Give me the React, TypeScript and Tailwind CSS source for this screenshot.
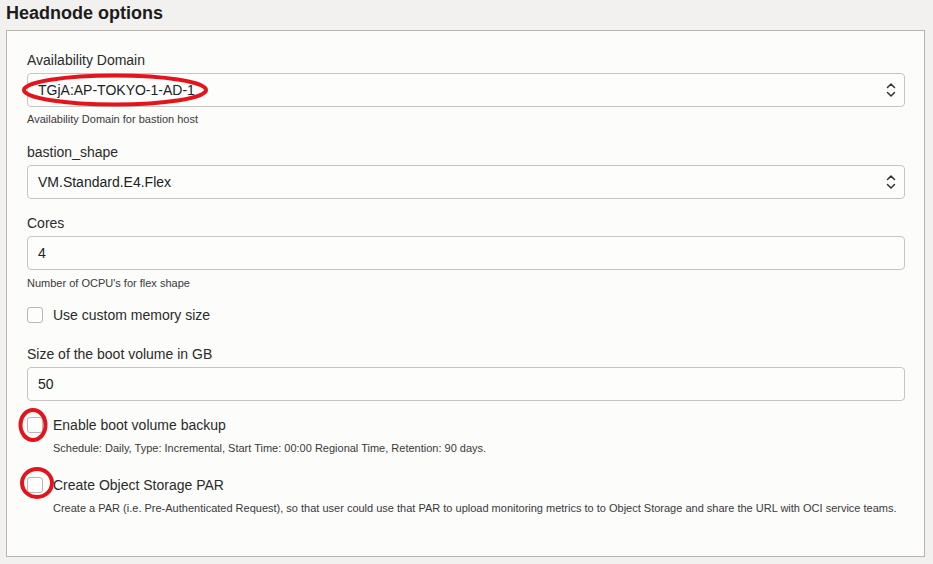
import * as React from "react"

function Chevrons() {
  return (
    <svg width="10" height="16" viewBox="0 0 10 16" fill="none" stroke="#333" strokeWidth="1.5" strokeLinecap="round" strokeLinejoin="round">
      <path d="M1.5 5.5 L5 2 L8.5 5.5" />
      <path d="M1.5 10.5 L5 14 L8.5 10.5" />
    </svg>
  )
}

function Label({ children, className = "" }: { children: React.ReactNode; className?: string }) {
  return <div className={`text-[14px] leading-[17px] text-[#2b2b2b] ${className}`}>{children}</div>
}

function Helper({ children, className = "" }: { children: React.ReactNode; className?: string }) {
  return <div className={`text-[11px] leading-[13px] text-[#3a3a3a] ${className}`}>{children}</div>
}

function Field({ value, select }: { value: string; select?: boolean }) {
  return (
    <div className="mt-[4px] h-[34px] flex items-center justify-between rounded-[4px] border border-[#c6c5c3] bg-[#fdfdfc] pl-[10px] pr-[8px] text-[14px] text-[#222]">
      <span>{value}</span>
      {select && <Chevrons />}
    </div>
  )
}

function Check({ label, className = "" }: { label: string; className?: string }) {
  return (
    <div className={`flex items-center h-[16px] ${className}`}>
      <div className="w-[16px] h-[16px] rounded-[3px] border border-[#b9b8b6] bg-[#fdfdfc]" />
      <span className="ml-[10px] text-[14px] leading-[17px] text-[#2b2b2b]">{label}</span>
    </div>
  )
}

export default function App() {
  return (
    <div className="relative w-[933px] h-[564px] bg-[#f2f1f0] overflow-hidden" style={{ fontFamily: '"Liberation Sans", Arial, sans-serif' }}>
      <div className="pl-[6px] pt-[1px] h-[30px] text-[18px] leading-[24px] font-bold text-[#1c1c1c]">Headnode options</div>

      <div className="ml-[6px] w-[919px] h-[527px] border border-[#b8b5b1] bg-[#fcfcfa] pl-[20px] pr-[19px] pt-[21px]">
        <Label>Availability Domain</Label>
        <Field value="TGjA:AP-TOKYO-1-AD-1" select />
        <Helper className="mt-[6px]">Availability Domain for bastion host</Helper>

        <Label className="mt-[18px]">bastion_shape</Label>
        <Field value="VM.Standard.E4.Flex" select />

        <Label className="mt-[16px]">Cores</Label>
        <Field value="4" />
        <Helper className="mt-[7px]">Number of OCPU's for flex shape</Helper>

        <Check label="Use custom memory size" className="mt-[17px]" />

        <Label className="mt-[23px]">Size of the boot volume in GB</Label>
        <Field value="50" />

        <Check label="Enable boot volume backup" className="mt-[16px]" />
        <Helper className="mt-[9px] ml-[26px]">Schedule: Daily, Type: Incremental, Start Time: 00:00 Regional Time, Retention: 90 days.</Helper>

        <Check label="Create Object Storage PAR" className="mt-[22px]" />
        <Helper className="mt-[9px] ml-[26px]">
          Create a PAR (i.e. Pre-Authenticated Request), so that user could use that PAR to upload monitoring metrics to to Object Storage and share the URL with OCI service teams.
        </Helper>
      </div>

      {/* red annotation marks */}
      <svg className="absolute left-0 top-0 pointer-events-none" width="933" height="564" fill="none" stroke="#e3141c" strokeWidth="4">
        <ellipse cx="115" cy="90" rx="91" ry="14.5" />
        <ellipse cx="33" cy="425" rx="12.5" ry="15" />
        <ellipse cx="37" cy="483" rx="15" ry="14" />
      </svg>
    </div>
  )
}
